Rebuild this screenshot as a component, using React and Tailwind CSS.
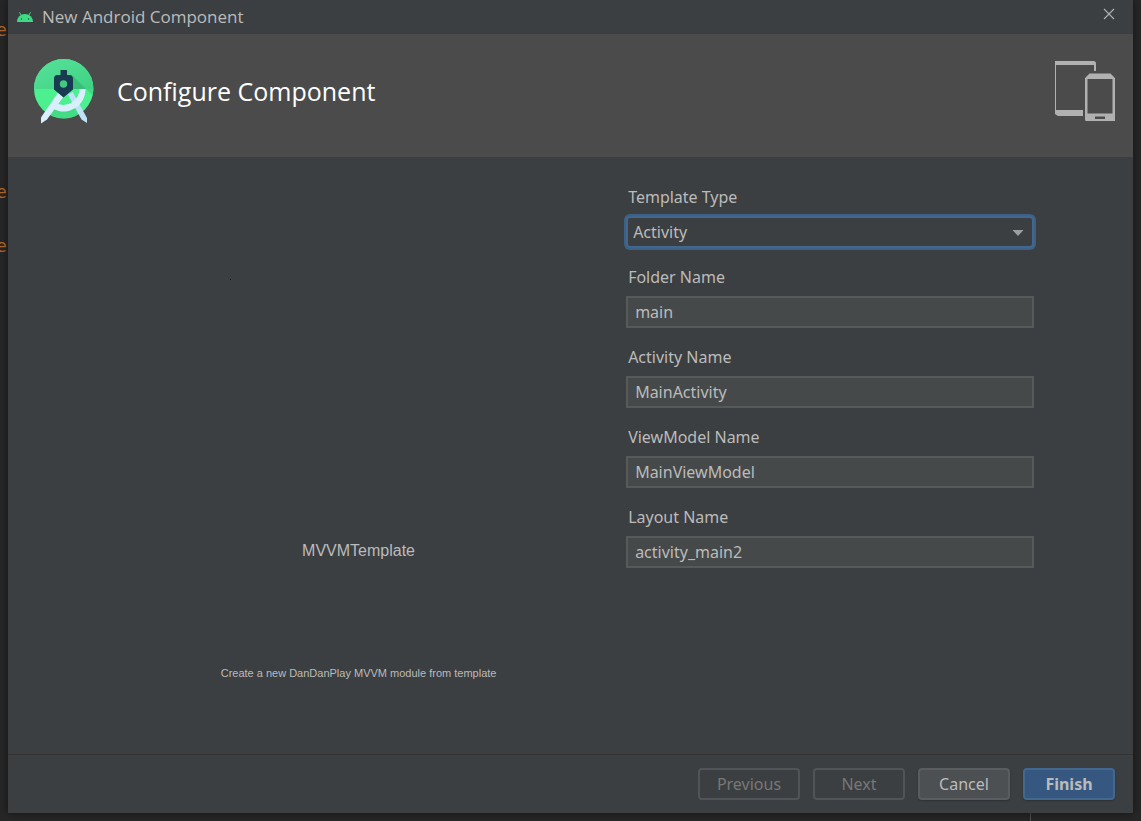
import React from "react";

const FIELDS = [
  { id: "folder-name", label: "Folder Name", value: "main" },
  { id: "activity-name", label: "Activity Name", value: "MainActivity" },
  { id: "viewmodel-name", label: "ViewModel Name", value: "MainViewModel" },
  { id: "layout-name", label: "Layout Name", value: "activity_main2" },
];

function AndroidHead() {
  return (
    <svg className="h-4 w-4" viewBox="0 0 16 16" aria-hidden="true">
      <path d="M0 13a8 8 0 0 1 16 0z" fill="#3ddc84" />
      <path d="M4.6 7.2 2.6 3.6M11.4 7.2l2-3.6" stroke="#3ddc84" strokeWidth="0.9" strokeLinecap="round" />
      <circle cx="4.4" cy="10" r="0.7" fill="#2c4a3a" />
      <circle cx="11.6" cy="10" r="0.7" fill="#2c4a3a" />
    </svg>
  );
}

function StudioLogo() {
  return (
    <svg className="h-[63px] w-15 overflow-visible" viewBox="0 0 60 63" aria-hidden="true">
      <defs>
        <clipPath id="disc">
          <circle cx="29.7" cy="29.7" r="29.7" />
        </clipPath>
        <linearGradient id="shade" x1="0" y1="0" x2="1" y2="1">
          <stop offset="0" stopColor="#57e39a" />
          <stop offset="1" stopColor="#3fd183" />
        </linearGradient>
      </defs>
      <g clipPath="url(#disc)">
        <rect width="60" height="60" fill="#4cf08f" />
        <rect width="60" height="30" fill="url(#shade)" />
        <path d="M33 11 52 30H39V17z" fill="#3bbd7a" />
        <path d="M52 30 60 38V30z" fill="#3fdb82" />
        <path d="M20 48q9 6 19-1l5 8-3 6H12z" fill="#3bcf7b" opacity="0.6" />
      </g>
      <path d="M34 35.5 38.7 33 53 59v5L47.5 60.5z" fill="#bfe2f8" />
      <path d="M24.5 33 30 37 13 60.5 7 64.5V58.5z" fill="#daeffd" />
      <path d="M51.5 30a22 22 0 0 1-32 20l3.5-5.5A16 16 0 0 0 45.5 30z" fill="#daeffd" />
      <path d="M26.5 11h6.500v5h2.500q3.500 0 3.500 3.500v11l-9.500 8-9.500-8v-11q0-3.500 3.500-3.500h3z" fill="#183b52" />
      <circle cx="29.5" cy="25" r="3.7" fill="#43c981" />
    </svg>
  );
}

function DevicesIcon() {
  return (
    <svg className="h-15 w-15" viewBox="0 0 60 60" aria-hidden="true">
      <path d="M0 0H38.500Q41 0 41 2.500V10H39V4H1V49H28V55H3L0 53z" fill="#b1b1b1" />
      <path
        fillRule="evenodd"
        d="M34.500 12.500H55.500L60 17V60H31.500Q30 60 30 58.500V17zM32.500 18V52.500H57.500V18zM40 55.500V58H50V55.500z"
        fill="#b1b1b1"
      />
    </svg>
  );
}

export default function App() {
  return (
    <div className="relative flex min-h-screen flex-col overflow-hidden bg-[#272727] px-2 pb-2 font-['Noto_Sans','Open_Sans',sans-serif] text-base leading-6 text-[#bbbbbb]">
      <div aria-hidden="true" className="absolute inset-0 font-['DejaVu_Sans_Mono',monospace] text-lg leading-6 text-[#b8682c]">
        <span className="absolute top-[18px] -left-1">e</span>
        <span className="absolute top-[180px] -left-1">e</span>
        <span className="absolute top-[234px] -left-1">e</span>
        <span className="absolute right-[110px] bottom-0 h-2 w-px bg-[#505050]" />
      </div>

      <main className="relative flex flex-1 flex-col bg-[#3c3f41] shadow-[0_0_10px_rgba(0,0,0,0.5)]">
        <div className="flex h-[34px] items-center justify-between pr-[18px] pl-[9px]">
          <div className="flex items-center gap-[9px]">
            <AndroidHead />
            <h1 className="font-['Open_Sans','Noto_Sans',sans-serif] text-[17px]">New Android Component</h1>
          </div>
          <button type="button" aria-label="Close" className="mb-1.5">
            <svg className="h-3 w-3" viewBox="0 0 12 12" aria-hidden="true">
              <path d="M1 1 11 11M11 1 1 11" stroke="#b0b3b5" strokeWidth="1.1" />
            </svg>
          </button>
        </div>

        <header className="flex h-[123px] items-center justify-between bg-[#4b4b4b] pr-[18px] pb-2.5 pl-[26px]">
          <div className="flex items-center gap-[23px]">
            <StudioLogo />
            <h2 className="font-['Open_Sans','Noto_Sans',sans-serif] text-[25px] leading-8 text-white">Configure Component</h2>
          </div>
          <DevicesIcon />
        </header>

        <div className="grid flex-1 grid-cols-[1fr_44%] gap-4 px-[99px]">
          <section className="flex flex-col items-center font-['Liberation_Sans',Arial,sans-serif]">
            <div className="flex h-[382px] w-[258px] items-start pt-[122px]">
              <span className="h-px w-px bg-black" />
            </div>
            <h3 className="text-base leading-6">MVVMTemplate</h3>
            <p className="mt-[102px] text-[11px] leading-4">Create a new DanDanPlay MVVM module from template</p>
          </section>

          <form className="flex flex-col gap-[17px] pt-7">
            <div className="flex flex-col gap-[7px]">
              <label htmlFor="template-type" className="pl-0.5 leading-6">Template Type</label>
              <div className="relative">
                <select
                  id="template-type"
                  defaultValue="Activity"
                  className="h-8 w-full appearance-none rounded-sm border-2 border-[#42678e] bg-[#3c3f41] pl-[5px] ring-2 ring-[#3d6185] outline-none"
                >
                  <option>Activity</option>
                </select>
                <svg className="pointer-events-none absolute top-3.5 right-2.5 h-1.5 w-3" viewBox="0 0 12 6" aria-hidden="true">
                  <path d="M0.5 0H11.5L6 6z" fill="#9c9fa1" />
                </svg>
              </div>
            </div>
            {FIELDS.map((field) => (
              <div key={field.id} className="flex flex-col gap-[7px]">
                <label htmlFor={field.id} className="pl-0.5 leading-6">{field.label}</label>
                <input
                  id={field.id}
                  type="text"
                  defaultValue={field.value}
                  className="h-8 w-full border-2 border-[#565a5b] bg-[#45494a] px-[7px] outline-none"
                />
              </div>
            ))}
          </form>
        </div>

        <footer className="flex h-[59px] items-center justify-end gap-[13px] border-t border-[#323232] pr-[18px]">
          <button type="button" disabled className="h-8 w-[102px] rounded-sm border-2 border-[#505456] text-[#777777]">Previous</button>
          <button type="button" disabled className="h-8 w-23 rounded-sm border-2 border-[#505456] text-[#777777]">Next</button>
          <button type="button" className="h-8 w-23 rounded-sm border-2 border-[#595d5f] bg-[#4c5052] shadow-[0_1px_2px_rgba(0,0,0,0.25)]">Cancel</button>
          <button type="button" className="h-8 w-23 rounded-sm border-2 border-[#42688f] bg-[#365880] font-bold shadow-[0_1px_2px_rgba(0,0,0,0.25)]">Finish</button>
        </footer>
      </main>
    </div>
  );
}
